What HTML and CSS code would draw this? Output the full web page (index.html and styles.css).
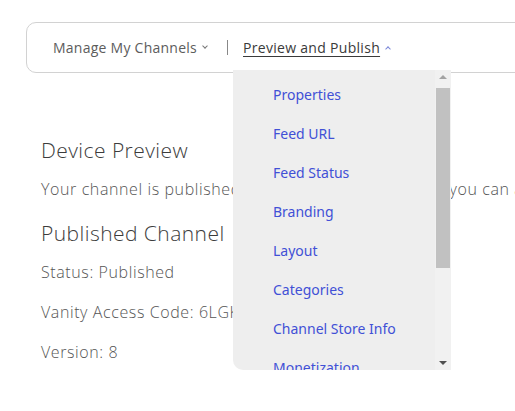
FILE: index.html
```html
<!DOCTYPE html>
<html>
<head>
<meta charset="utf-8">
<link rel="stylesheet" href="styles.css">
</head>
<body>
<div class="page">
  <nav class="navbar">
    <div class="nav-item">Manage My Channels <span class="chev down"></span></div>
    <div class="sep"></div>
    <div class="nav-item active"><span class="link">Preview and Publish</span> <span class="chev up"></span>
      <div class="menu">
        <ul class="menu-list">
          <li>Properties</li>
          <li>Feed URL</li>
          <li>Feed Status</li>
          <li>Branding</li>
          <li>Layout</li>
          <li>Categories</li>
          <li>Channel Store Info</li>
          <li>Monetization</li>
          <li>Static Analysis</li>
          <li>Preview</li>
          <li>Publish</li>
          <li>Support</li>
        </ul>
        <div class="scrollbar">
          <div class="arrow up-arrow"></div>
          <div class="track"><div class="thumb"></div></div>
          <div class="arrow down-arrow"></div>
        </div>
      </div>
    </div>
  </nav>
  <main class="content">
    <h2>Device Preview</h2>
    <p>Your channel is published. To view it on your device, you can add it with the code below.</p>
    <h2>Published Channel</h2>
    <p>Status: Published</p>
    <p>Vanity Access Code: 6LGKTW</p>
    <p>Version: 8</p>
  </main>
</div>
</body>
</html>
```
FILE: styles.css
```css
html, body { margin: 0; padding: 0; background: #fff; }
body { font-family: "Noto Sans", "DejaVu Sans", sans-serif; overflow: hidden; width: 515px; height: 411px; }
.page { padding: 22px 0 0 26px; }
.navbar {
  width: 540px; height: 49px;
  border: 1px solid #d2d2d2; border-radius: 10px;
  display: flex; align-items: center;
  padding-left: 26px; box-sizing: content-box;
  font-family: "Open Sans", "Noto Sans", sans-serif;
  font-size: 14px; font-weight: 400; color: #5c5c5c; letter-spacing: 0.25px;
}
.nav-item { position: relative; display: flex; align-items: center; white-space: nowrap; }
.sep { width: 1px; height: 15px; background: #888; margin: 0 15px 0 20px; }
.active { color: #3a3a3a; }
.link { text-decoration: underline; text-underline-offset: 3px; letter-spacing: 0.3px; }
.chev { display: inline-block; width: 3px; height: 3px; border: solid #777; border-width: 0 1px 1px 0; margin-left: 6px; }
.chev.down { transform: rotate(45deg); margin-top: -4px; }
.chev.up { transform: rotate(-135deg); margin-top: 2px; border-color: #7a87d8; }
.menu {
  position: absolute; left: -10px; top: 32px;
  width: 218px; height: 300px;
  background: #eeeeee;
  border-bottom-left-radius: 10px;
  overflow: hidden;
  display: flex;
  font-family: "Noto Sans", sans-serif; letter-spacing: 0;
}
.menu-list { flex: 1; margin: 0; padding: 5px 0 0 0; list-style: none; }
.menu-list li { height: 39px; line-height: 39px; padding-left: 40px; color: #4150d6; font-size: 14px; white-space: nowrap; }
.scrollbar { width: 16px; background: #f1f1f1; display: flex; flex-direction: column; }
.arrow { height: 16px; display: flex; align-items: center; justify-content: center; }
.up-arrow::before { content: ""; border: 4px solid transparent; border-top: 0; border-bottom: 4px solid #a3a3a3; margin-top: -2px; }
.down-arrow::before { content: ""; border: 4px solid transparent; border-bottom: 0; border-top: 4px solid #505050; margin-top: 2px; }
.track { flex: 1; padding: 2px 1px 0 1px; }
.thumb { height: 180px; background: #c1c1c1; }
.content { padding: 63px 0 0 15px; color: #555; font-family: "Open Sans", "Noto Sans", sans-serif; }
.content h2 { font-size: 21px; font-weight: 300; color: #3c3c3c; margin: 0 0 14px 0; line-height: 28px; letter-spacing: 0.45px; }
.content p { font-size: 16px; font-weight: 300; margin: 0 0 18px 0; line-height: 22px; white-space: nowrap; letter-spacing: 0.6px; }
.content p:first-of-type { margin-top: 1px; margin-bottom: 19px; }
```
